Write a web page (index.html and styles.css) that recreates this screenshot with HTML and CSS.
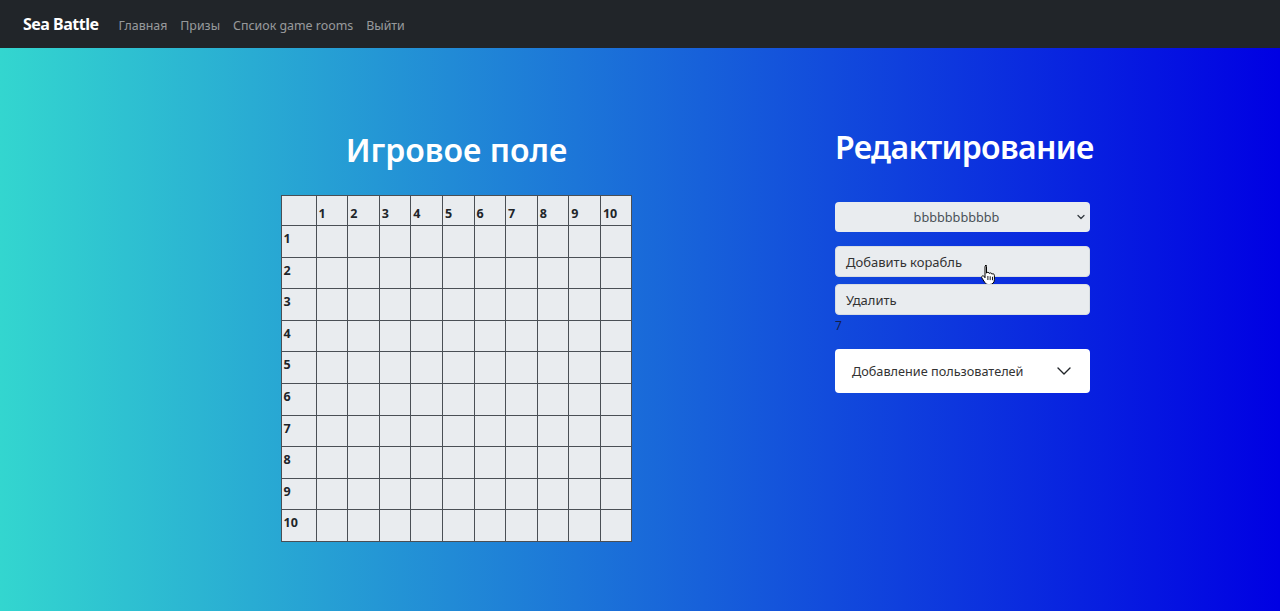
FILE: index.html
```html
<!DOCTYPE html>
<html lang="ru">
<head>
<meta charset="utf-8">
<title>Sea Battle</title>
<link rel="stylesheet" href="styles.css">
</head>
<body>
<nav class="navbar">
  <a class="brand" href="#">Sea Battle</a>
  <ul class="nav">
    <li><a href="#">Главная</a></li>
    <li><a href="#">Призы</a></li>
    <li><a href="#">Спсиок game rooms</a></li>
    <li><a href="#">Выйти</a></li>
  </ul>
</nav>
<main class="page">
  <section class="board-col">
    <h1 class="title">Игровое поле</h1>
    <table class="board">
      <thead>
        <tr><th class="corner"></th><th>1</th><th>2</th><th>3</th><th>4</th><th>5</th><th>6</th><th>7</th><th>8</th><th>9</th><th>10</th></tr>
      </thead>
      <tbody>
        <tr><th>1</th><td></td><td></td><td></td><td></td><td></td><td></td><td></td><td></td><td></td><td></td></tr>
        <tr><th>2</th><td></td><td></td><td></td><td></td><td></td><td></td><td></td><td></td><td></td><td></td></tr>
        <tr><th>3</th><td></td><td></td><td></td><td></td><td></td><td></td><td></td><td></td><td></td><td></td></tr>
        <tr><th>4</th><td></td><td></td><td></td><td></td><td></td><td></td><td></td><td></td><td></td><td></td></tr>
        <tr><th>5</th><td></td><td></td><td></td><td></td><td></td><td></td><td></td><td></td><td></td><td></td></tr>
        <tr><th>6</th><td></td><td></td><td></td><td></td><td></td><td></td><td></td><td></td><td></td><td></td></tr>
        <tr><th>7</th><td></td><td></td><td></td><td></td><td></td><td></td><td></td><td></td><td></td><td></td></tr>
        <tr><th>8</th><td></td><td></td><td></td><td></td><td></td><td></td><td></td><td></td><td></td><td></td></tr>
        <tr><th>9</th><td></td><td></td><td></td><td></td><td></td><td></td><td></td><td></td><td></td><td></td></tr>
        <tr><th>10</th><td></td><td></td><td></td><td></td><td></td><td></td><td></td><td></td><td></td><td></td></tr>
      </tbody>
    </table>
  </section>
  <section class="edit-col">
    <h1 class="title title-edit">Редактирование</h1>
    <div class="controls">
      <div class="select">
        <span>bbbbbbbbbbb</span>
        <svg class="select-caret" width="10" height="8" viewBox="0 0 16 16"><path d="M2 5l6 6 6-6" fill="none" stroke="#343a40" stroke-width="2.6" stroke-linecap="round" stroke-linejoin="round"/></svg>
      </div>
      <button class="btn btn-add">Добавить корабль
        <svg class="cursor" width="16" height="22" viewBox="0 0 16 22"><path d="M5 1.5c.9 0 1.5.6 1.5 1.5v6.2c.3-.6.8-.9 1.4-.9.8 0 1.3.5 1.4 1.2.3-.4.7-.6 1.2-.6.8 0 1.3.6 1.4 1.3.3-.3.6-.4 1-.4.9 0 1.5.7 1.5 1.6v4.3c0 2.6-1.8 4.8-4.6 4.8H8.5c-1.6 0-2.8-.7-3.7-2L1.9 14c-.5-.7-.3-1.6.4-2 .6-.4 1.4-.2 1.8.4l.9 1.3V3c0-.9.6-1.5 1.5-1.5z" fill="#fff" stroke="#000" stroke-width="1"/><path d="M7.9 12v4M10.2 12.3v3.8M12.5 12.8v3.4" stroke="#000" stroke-width=".9"/></svg>
      </button>
      <button class="btn">Удалить</button>
      <div class="count">7</div>
      <div class="accordion">
        <span>Добавление пользователей</span>
        <svg width="16" height="16" viewBox="0 0 16 16"><path d="M2 5l6 6 6-6" fill="none" stroke="#212529" stroke-width="1.4" stroke-linecap="round" stroke-linejoin="round"/></svg>
      </div>
    </div>
  </section>
</main>
</body>
</html>
```
FILE: styles.css
```css
* { box-sizing: border-box; }
html, body { margin: 0; padding: 0; height: 100%; }
body {
  font-family: "Noto Sans", "Open Sans", sans-serif;
  color: #212529;
  display: flex;
  flex-direction: column;
}
.navbar {
  height: 48px;
  background: #212529;
  display: flex;
  align-items: center;
  padding-left: 23px;
  flex-shrink: 0;
}
.brand {
  color: #fff;
  font-weight: 700;
  font-size: 16px;
  text-decoration: none;
  margin-right: 20px;
  letter-spacing: -0.5px;
}
.nav {
  list-style: none;
  margin: 0;
  padding: 0;
  display: flex;
  gap: 13px;
}
.nav a {
  color: rgba(255, 255, 255, 0.55);
  text-decoration: none;
  font-size: 12.4px;
}
.page {
  flex: 1;
  background: linear-gradient(to right, #33d6cf, #0000e3);
  display: flex;
  align-items: flex-start;
  padding-left: 281px;
  padding-top: 82px;
}
.board-col {
  width: 351px;
  display: flex;
  flex-direction: column;
  align-items: center;
}
.title {
  margin: 0;
  color: #fff;
  font-size: 32px;
  font-weight: 600;
  line-height: 40px;
  white-space: nowrap;
}
.board-col .title { margin-bottom: 25px; }
.board {
  border-collapse: collapse;
  background: #e9ecef;
  table-layout: fixed;
  width: 351px;
}
.board th, .board td {
  border: 1px solid #4a4f55;
  padding: 0 0 0 2px;
  font-size: 12.5px;
  font-weight: 700;
  text-align: left;
  color: #212529;
}
.board th { width: 31.6px; }
.board th.corner, .board tbody th { width: 35px; }
.board thead th {
  height: 30px;
  vertical-align: bottom;
  padding-bottom: 3px;
}
.board tbody tr { height: 31.6px; }
.board tbody th { vertical-align: top; padding-top: 4px; }
.edit-col {
  margin-left: 203px;
  width: 260px;
}
.title-edit { letter-spacing: -0.65px; }
.edit-col .title { margin-bottom: 35px; margin-top: -3px; }
.controls {
  width: 255px;
  display: flex;
  flex-direction: column;
}
.select {
  height: 30px;
  background: #e9ecef;
  border-radius: 4px;
  display: flex;
  align-items: center;
  justify-content: center;
  padding-right: 12px;
  position: relative;
  font-size: 12.7px;
  color: #495057;
}
.select-caret {
  position: absolute;
  right: 4px;
  top: 11px;
}
.btn {
  position: relative;
  height: 31px;
  margin-top: 14px;
  background: #e9ecef;
  border: 1px solid #d8dde2;
  border-radius: 4px;
  font-family: inherit;
  font-size: 13px;
  color: #333;
  text-align: left;
  padding: 0 10px;
}
.btn + .btn { margin-top: 7px; }
.cursor {
  position: absolute;
  left: 144px;
  top: 17px;
}
.count {
  font-size: 12px;
  color: #14204a;
  line-height: 18px;
  margin-top: 2px;
}
.accordion {
  margin-top: 14px;
  height: 44px;
  background: #fff;
  border-radius: 4px;
  display: flex;
  align-items: center;
  justify-content: space-between;
  padding: 0 18px 0 17px;
  font-size: 12.7px;
  color: #333;
}
```
